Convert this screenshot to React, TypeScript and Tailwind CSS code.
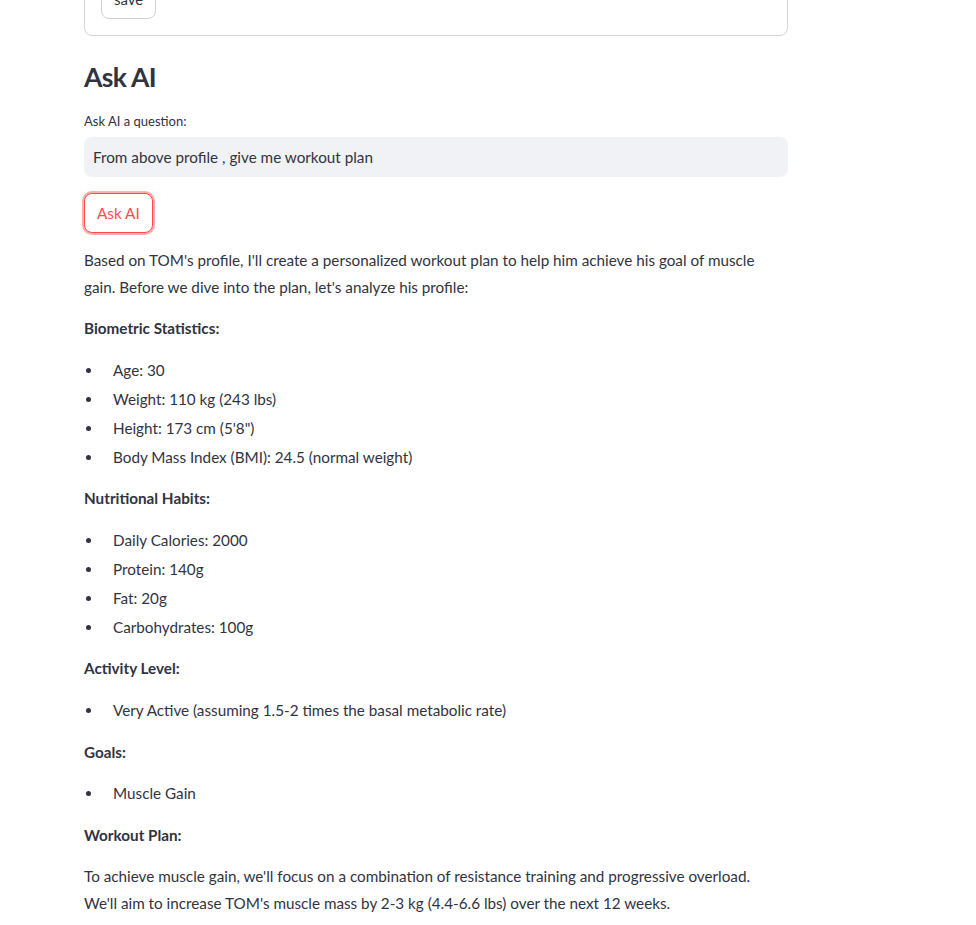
import React from 'react';

const font = { fontFamily: 'Lato, "Noto Sans", sans-serif' };

function Bullets({ items }: { items: string[] }) {
  return (
    <ul className="flex flex-col gap-[2.4px] mb-[15px]">
      {items.map((item) => (
        <li key={item} className="flex items-center leading-[26.6px]">
          <span className="w-[29px] flex pl-[2px]">
            <span className="w-[5px] h-[5px] rounded-full bg-[#31333f]" />
          </span>
          <span>{item}</span>
        </li>
      ))}
    </ul>
  );
}

function Heading({ children }: { children: React.ReactNode }) {
  return <p className="font-bold leading-[26.6px] mb-[15px]">{children}</p>;
}

export default function App() {
  return (
    <div className="min-h-screen bg-white text-[#31333f] overflow-hidden" style={font}>
      <div className="ml-[84px] w-[704px] text-[15.25px]">
        {/* form card, scrolled partly out of view */}
        <div className="-mt-[38px] border border-[#d6d6d9] rounded-lg p-4">
          <button className="h-10 px-3 rounded-lg border border-[#d0d0d4] bg-white text-[15px]">save</button>
        </div>

        <h2 className="mt-6 text-[26.5px] leading-[34px] font-bold tracking-tight">Ask AI</h2>

        <label className="block mt-[17px] text-[13px] leading-5">Ask AI a question:</label>
        <div className="mt-[6px] h-10 rounded-lg bg-[#f0f2f6] flex items-center px-[9px] text-[15.25px]">
          From above profile , give me workout plan
        </div>

        <button className="mt-4 h-10 px-3 rounded-lg border border-[#ff4b4b] text-[#ff4b4b] bg-white shadow-[0_0_0_2px_rgba(255,75,75,0.45)]">
          Ask AI
        </button>

        <div className="mt-[14px]">
          <p className="leading-[26.6px] mb-[15px]">
            Based on TOM's profile, I'll create a personalized workout plan to help him achieve his goal of muscle
            <br />
            gain. Before we dive into the plan, let's analyze his profile:
          </p>
          <Heading>Biometric Statistics:</Heading>
          <Bullets items={['Age: 30', 'Weight: 110 kg (243 lbs)', 'Height: 173 cm (5\'8")', 'Body Mass Index (BMI): 24.5 (normal weight)']} />
          <Heading>Nutritional Habits:</Heading>
          <Bullets items={['Daily Calories: 2000', 'Protein: 140g', 'Fat: 20g', 'Carbohydrates: 100g']} />
          <Heading>Activity Level:</Heading>
          <Bullets items={['Very Active (assuming 1.5-2 times the basal metabolic rate)']} />
          <Heading>Goals:</Heading>
          <Bullets items={['Muscle Gain']} />
          <Heading>Workout Plan:</Heading>
          <p className="leading-[26.6px] mb-[15px]">
            To achieve muscle gain, we'll focus on a combination of resistance training and progressive overload.
            <br />
            We'll aim to increase TOM's muscle mass by 2-3 kg (4.4-6.6 lbs) over the next 12 weeks.
          </p>
        </div>
      </div>
    </div>
  );
}
